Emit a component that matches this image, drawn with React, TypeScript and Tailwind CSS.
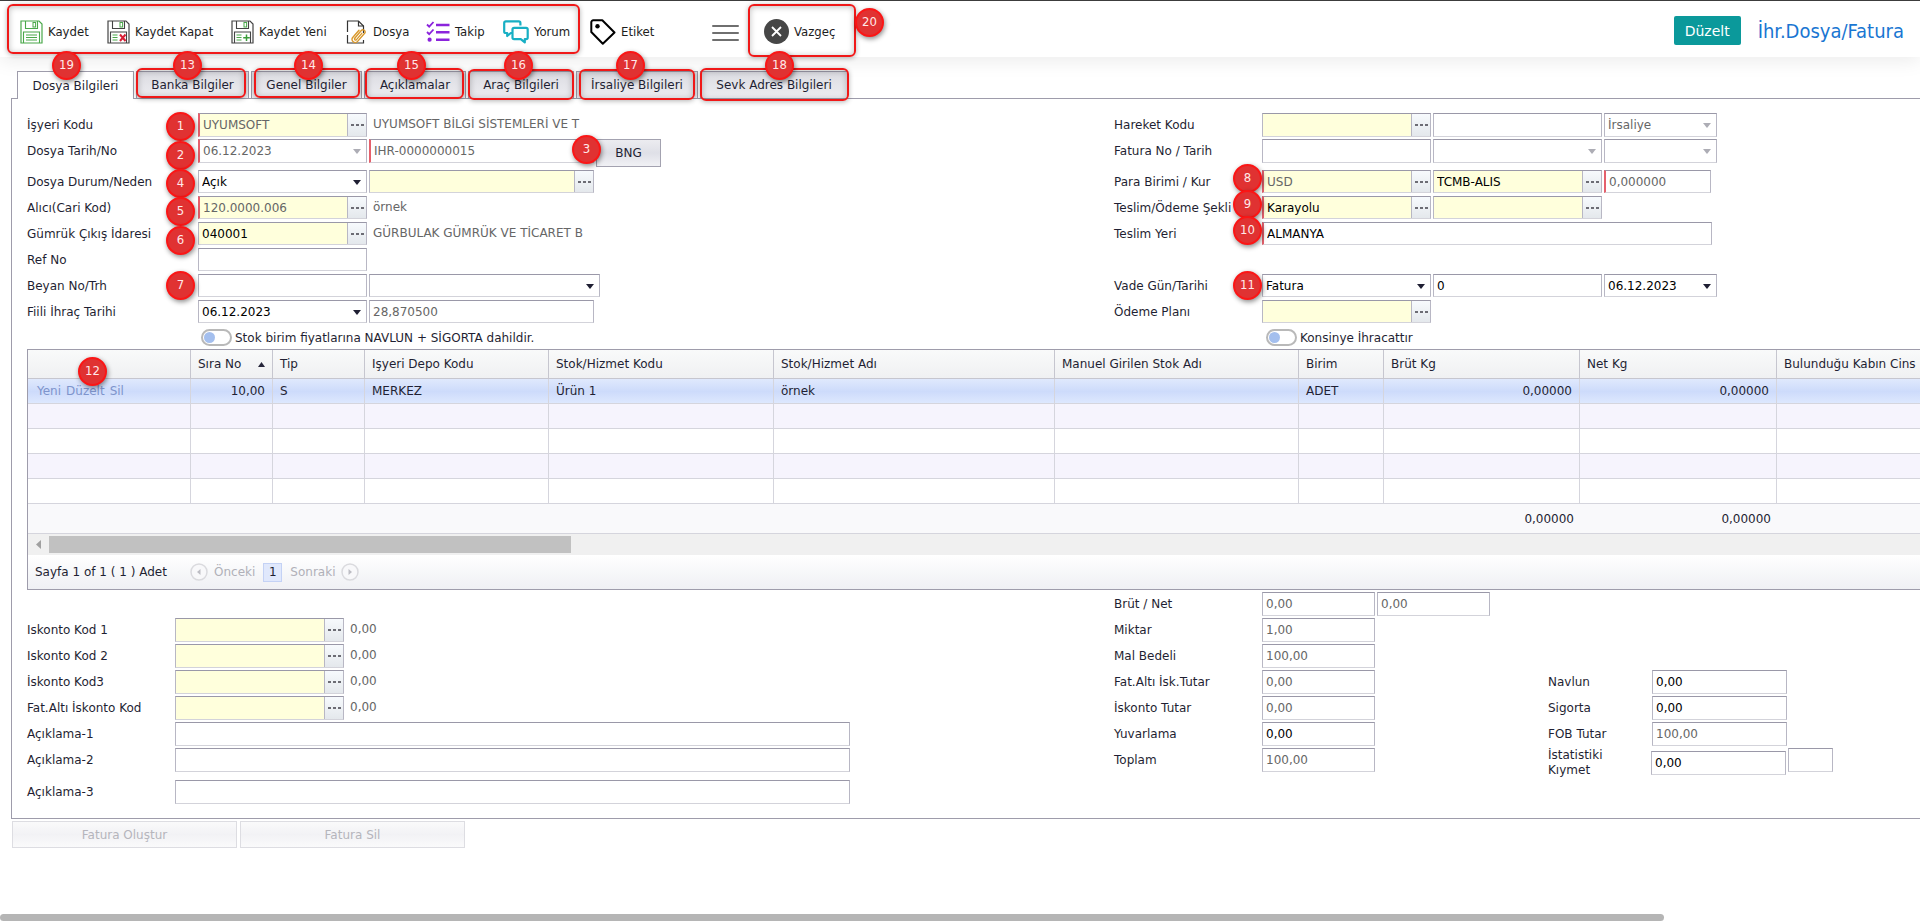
import type { ReactNode } from "react";

const tabs = [
    { title: "Dosya Bilgileri", width: "w-[117px]", badge: 19, badgePos: "left-[35px]", frame: "" },
    { title: "Banka Bilgiler", width: "w-[113px]", badge: 13, badgePos: "left-[37px]", frame: "left-0 right-[3px] -top-[3px] bottom-0" },
    { title: "Genel Bilgiler", width: "w-[111px]", badge: 14, badgePos: "left-[43px]", frame: "left-[3px] right-[2px] -top-[3px] bottom-0" },
    { title: "Açıklamalar", width: "w-[102px]", badge: 15, badgePos: "left-[33px]", frame: "left-[1px] right-[2px] -top-[3px] -bottom-[1px]" },
    { title: "Araç Bilgileri", width: "w-[106px]", badge: 16, badgePos: "left-[36px]", frame: "left-0 right-0 -top-[2px] -bottom-[2px]" },
    { title: "İrsaliye Bilgileri", width: "w-[122px]", badge: 17, badgePos: "left-[40px]", frame: "left-[3px] right-[3px] -top-[2px] -bottom-[2px]" },
    { title: "Sevk Adres Bilgileri", width: "w-[148px]", badge: 18, badgePos: "left-[65px]", frame: "left-0 -right-px -top-[3px] -bottom-[3px]" },
];

const columns = [
    { title: "", width: "w-[163px]", value: "", total: "" },
    { title: "Sıra No", width: "w-[82px]", value: "10,00", total: "", right: true, sorted: true },
    { title: "Tip", width: "w-[92px]", value: "S", total: "" },
    { title: "Işyeri Depo Kodu", width: "w-[184px]", value: "MERKEZ", total: "" },
    { title: "Stok/Hizmet Kodu", width: "w-[225px]", value: "Ürün 1", total: "" },
    { title: "Stok/Hizmet Adı", width: "w-[281px]", value: "örnek", total: "" },
    { title: "Manuel Girilen Stok Adı", width: "w-[244px]", value: "", total: "" },
    { title: "Birim", width: "w-[85px]", value: "ADET", total: "" },
    { title: "Brüt Kg", width: "w-[196px]", value: "0,00000", total: "0,00000", right: true },
    { title: "Net Kg", width: "w-[197px]", value: "0,00000", total: "0,00000", right: true },
    { title: "Bulunduğu Kabın Cins", width: "", value: "", total: "" },
];

function Badge({ n, className = "" }: { n: number; className?: string }) {
    return (
        <span className={`absolute z-20 flex h-[29px] w-[29px] items-center justify-center rounded-full border-2 border-[#fb1616] bg-[#e03232] pb-[2px] font-['DejaVu_Sans_Condensed','DejaVu_Sans',sans-serif] text-[13px] leading-none text-[#ffe9e9] shadow-[1px_2px_5px_rgba(0,0,0,0.45)] pointer-events-none ${className}`}>
            {n}
        </span>
    );
}

function Frame({ className = "" }: { className?: string }) {
    return (
        <span className={`absolute z-10 rounded-[6px] border-2 border-[#f01818] shadow-[0_1px_5px_rgba(0,0,0,0.3),inset_0_1px_6px_rgba(0,0,0,0.25)] pointer-events-none ${className}`} />
    );
}

function Floppy({ color, mark }: { color: string; mark: "lines" | "x" | "plus" }) {
    return (
        <svg width="23" height="24" viewBox="0 0 23 24" fill="none" className="shrink-0">
            <path d="M1 1h18l3 3v19H1z" stroke={color} strokeWidth="1.2" />
            <path d="M5.5 1v7.5h12V1" stroke={color} strokeWidth="1.1" />
            <rect x="13" y="2.5" width="2.6" height="4.5" stroke="#4aa84a" strokeWidth="1" />
            <path d="M3.5 23V12h16v11" stroke={color} strokeWidth="1.1" />
            {mark === "lines" && <path d="M6 15h11M6 17.5h11M6 20h11" stroke={color} strokeWidth="1.1" />}
            {mark !== "lines" && <path d="M5.5 15h5M5.5 17.5h5M5.5 20h5" stroke="#4aa84a" strokeWidth="1.1" />}
            {mark === "x" && <path d="M13 14.5l5.5 6.5M18.5 14.5L13 21" stroke="#d81f35" strokeWidth="2" />}
            {mark === "plus" && <path d="M15.5 14.5v6.5M12.2 17.8h6.6" stroke="#3a9c3a" strokeWidth="1.5" />}
        </svg>
    );
}

function DosyaIcon() {
    return (
        <svg width="22" height="24" viewBox="0 0 22 24" fill="none" className="shrink-0">
            <path d="M1.5 12V1h11l5 5v7M1.5 15v8h16v-3" stroke="#333" strokeWidth="1.2" />
            <path d="M12.5 1v5h5" stroke="#333" strokeWidth="1.2" />
            <path d="M8.5 18.5l6.8-8c1.7-2 5 .6 3.3 2.8l-7 8.1c-2.6 3-7.4-.8-4.9-3.9l6.3-7.3" stroke="#d9982b" strokeWidth="1.4" strokeLinecap="round" />
            <path d="M8.8 18.6c-.7 1.1.7 2.1 1.5 1.2l5.5-6.5" stroke="#d9982b" strokeWidth="1.3" strokeLinecap="round" />
        </svg>
    );
}

function TakipIcon() {
    return (
        <svg width="24" height="22" viewBox="0 0 24 22" fill="none" stroke="#8b24dc" className="shrink-0">
            <path d="M1 3.5l2.2 2.2L7.5 1M1 11l2.2 2.2L7.5 8.5" strokeWidth="1.8" />
            <path d="M10 4h13.5M10 11.3h13.5M10 18.7h13.5" strokeWidth="2.4" />
            <circle cx="3.6" cy="18.7" r="2.1" fill="#8b24dc" stroke="none" />
        </svg>
    );
}

function YorumIcon() {
    return (
        <svg width="26" height="24" viewBox="0 0 26 24" fill="none" stroke="#18afc4" strokeWidth="2.2" strokeLinejoin="round" className="shrink-0">
            <path d="M9.5 13H7.8l-3.6 3v-3H2.8a1.6 1.6 0 0 1-1.6-1.6V3a1.6 1.6 0 0 1 1.6-1.6h13A1.6 1.6 0 0 1 17.4 3v2.6" />
            <path d="M11.1 7.9h12a1.6 1.6 0 0 1 1.6 1.6v8a1.6 1.6 0 0 1-1.6 1.6h-1.3v3.3l-4-3.3h-6.7a1.6 1.6 0 0 1-1.6-1.6v-8a1.6 1.6 0 0 1 1.6-1.6z" />
        </svg>
    );
}

function EtiketIcon() {
    return (
        <svg width="26" height="26" viewBox="0 0 26 26" fill="none" className="shrink-0">
            <path d="M1.3 3.3a2 2 0 0 1 2-2h9l12.200 12.200L12.800 24.700 1.300 13z" stroke="#000" strokeWidth="2" strokeLinejoin="round" />
            <circle cx="7.5" cy="7.3" r="2.2" fill="#000" />
        </svg>
    );
}

function ToolButton({ icon, text, className = "" }: { icon: ReactNode; text: string; className?: string }) {
    return (
        <button className={`flex items-center gap-[5px] whitespace-nowrap text-left ${className}`}>
            {icon}
            <span>{text}</span>
        </button>
    );
}

function Header() {
    return (
        <header className="relative flex h-[57px] items-center border-t border-[#3c3c3c] bg-white pl-5 pr-4 pt-[5px] font-['DejaVu_Sans_Condensed','DejaVu_Sans',sans-serif] text-[13px] text-[#1d1d1d] shadow-[0_4px_18px_rgba(0,0,0,0.08)]">
            <Frame className="left-[7px] top-[3px] h-[50px] w-[573px]" />
            <ToolButton className="w-[87px]" icon={<Floppy color="#4aa84a" mark="lines" />} text="Kaydet" />
            <ToolButton className="w-[124px]" icon={<Floppy color="#444" mark="x" />} text="Kaydet Kapat" />
            <ToolButton className="w-[115px]" icon={<Floppy color="#444" mark="plus" />} text="Kaydet Yeni" />
            <ToolButton className="w-[80px]" icon={<DosyaIcon />} text="Dosya" />
            <ToolButton className="w-[77px]" icon={<TakipIcon />} text="Takip" />
            <ToolButton className="w-[87px]" icon={<YorumIcon />} text="Yorum" />
            <ToolButton className="w-[122px]" icon={<EtiketIcon />} text="Etiket" />
            <button aria-label="Menü" className="flex w-[27px] flex-col gap-[5px] pt-[2px]">
                <span className="h-[2px] w-full rounded bg-[#6f6f6f]" />
                <span className="h-[2px] w-full rounded bg-[#6f6f6f]" />
                <span className="h-[2px] w-full rounded bg-[#6f6f6f]" />
            </button>
            <div className="relative ml-[9px] flex h-[51px] w-[108px] items-center pl-4">
                <Frame className="-top-[2px] bottom-0 left-0 right-0" />
                <ToolButton
                    icon={
                        <svg width="25" height="25" viewBox="0 0 25 25" className="shrink-0">
                            <circle cx="12.5" cy="12.5" r="12.5" fill="#464646" />
                            <path d="M8 8l9 9M17 8l-9 9" stroke="#fff" strokeWidth="1.8" />
                        </svg>
                    }
                    text="Vazgeç"
                />
                <Badge n={20} className="-right-[28px] top-[2px]" />
            </div>
            <div className="ml-auto flex items-center gap-[17px] pb-[2px]">
                <button className="h-[29px] w-[67px] rounded-[2px] bg-[#0b999b] font-['DejaVu_Sans',sans-serif] text-[14px] text-white">Düzelt</button>
                <h1 className="text-[20px] text-[#1976d2]">İhr.Dosya/Fatura</h1>
            </div>
        </header>
    );
}

function TabBar() {
    return (
        <nav className="relative z-10 mt-[14px] flex h-[27px] gap-[2px] pl-[17px]">
            {tabs.map((tab, index) => (
                <div key={tab.title} className={`relative ${tab.width} shrink-0`}>
                    <button
                        className={`w-full whitespace-nowrap border border-b-0 border-[#9e9cab] text-center ${index === 0 ? "h-[28px] bg-white" : "h-[27px] bg-gradient-to-b from-[#dcdce2] to-[#ededf1]"}`}
                    >
                        {tab.title}
                    </button>
                    {tab.frame && <Frame className={tab.frame} />}
                    <Badge n={tab.badge} className={`-top-[20px] ${tab.badgePos}`} />
                </div>
            ))}
        </nav>
    );
}

type RowProps = { label: string; id: string; tall?: boolean; labelWidth?: string; className?: string; children: ReactNode };

function Row({ label, id, tall, labelWidth = "w-[171px]", className = "", children }: RowProps) {
    return (
        <div className={`relative flex gap-[2px] ${tall ? "mb-[2px] h-6" : "mb-[3px] h-[23px]"} ${className}`}>
            <label htmlFor={id} className={`-mr-[2px] flex shrink-0 items-center whitespace-nowrap ${labelWidth}`}>
                {label}
            </label>
            {children}
        </div>
    );
}

const box = "border border-t-[#9a98a8] border-l-[#b8b7c4] border-r-[#b8b7c4] border-b-[#d3d3da]";

type FieldProps = { id: string; name?: string; value?: string; width?: string; muted?: boolean; required?: boolean };

function TextField({ id, name, value = "", width = "w-[169px]", muted, required }: FieldProps) {
    return (
        <input
            id={id}
            aria-label={name}
            defaultValue={value}
            readOnly={muted}
            className={`h-full shrink-0 bg-white px-[3px] outline-none ${box} ${width} ${muted ? "text-[#666]" : "text-black"} ${required ? "border-l-2 border-l-[#e5606c]" : ""}`}
        />
    );
}

function LookupField({ id, name, value = "", width = "w-[169px]", muted, required }: FieldProps) {
    return (
        <div className={`flex h-full shrink-0 ${box} ${width} ${required ? "border-l-2 border-l-[#e5606c]" : ""}`}>
            <input
                id={id}
                aria-label={name}
                defaultValue={value}
                readOnly={muted}
                className={`min-w-0 flex-1 bg-[#ffffdc] px-[3px] outline-none ${muted ? "text-[#666]" : "text-black"}`}
            />
            <button aria-label="Seç" className="flex w-[19px] items-center justify-center gap-[2px] border-l border-[#b8b7c4] bg-gradient-to-b from-[#f7fafd] to-[#e4e8ec]">
                <span className="h-[2px] w-[3px] bg-[#6c6c74]" />
                <span className="h-[2px] w-[3px] bg-[#6c6c74]" />
                <span className="h-[2px] w-[3px] bg-[#6c6c74]" />
            </button>
        </div>
    );
}

function SelectField({ id, name, value = "", width = "w-[169px]", muted, required }: FieldProps) {
    return (
        <div className={`relative h-full shrink-0 ${width}`}>
            <select
                id={id}
                aria-label={name}
                className={`h-full w-full appearance-none bg-white px-[3px] outline-none ${box} ${muted ? "text-[#666]" : "text-black"} ${required ? "border-l-2 border-l-[#e5606c]" : ""}`}
            >
                <option>{value}</option>
            </select>
            <svg width="8" height="5" viewBox="0 0 8 5" className={`absolute right-[6px] top-[10px] pointer-events-none ${muted ? "text-[#adadb5]" : "text-[#1f1f33]"}`}>
                <path d="M0 0h8L4 5z" fill="currentColor" />
            </svg>
        </div>
    );
}

function Note({ children }: { children: ReactNode }) {
    return <output className="ml-1 whitespace-nowrap pt-[2px] text-[#666]">{children}</output>;
}

function Toggle({ id, label, className = "" }: { id: string; label: string; className?: string }) {
    return (
        <div className={`flex h-[23px] items-center gap-[3px] ${className}`}>
            <input
                id={id}
                type="checkbox"
                className="flex h-[17px] w-[31px] appearance-none items-center rounded-full border-2 border-[#b9b9b9] bg-white px-px before:size-[11px] before:rounded-full before:bg-[#a4bfee] checked:before:ml-auto"
            />
            <label htmlFor={id}>{label}</label>
        </div>
    );
}

function FileForm() {
    return (
        <section className="grid grid-cols-[1087fr_806fr]">
            <div>
                <Row label="İşyeri Kodu" id="isyeri" tall>
                    <LookupField id="isyeri" value="UYUMSOFT" muted required />
                    <Note>UYUMSOFT BİLGİ SİSTEMLERİ VE T</Note>
                    <Badge n={1} className="left-[139px] -top-[1px]" />
                </Row>
                <Row label="Dosya Tarih/No" id="tarih" tall className="mb-[7px]">
                    <SelectField id="tarih" value="06.12.2023" muted required />
                    <TextField id="dosya-no" name="Dosya No" value="IHR-0000000015" width="w-[225px]" muted required />
                    <button className="h-[28px] w-[65px] shrink-0 border border-[#a3a2b0] bg-gradient-to-b from-[#ececf0] via-[#dfe0e7] to-[#f1f1f5]">BNG</button>
                    <Badge n={2} className="left-[139px] top-[2px]" />
                    <Badge n={3} className="left-[545px] -top-[4px]" />
                </Row>
                <Row label="Dosya Durum/Neden" id="durum">
                    <SelectField id="durum" value="Açık" />
                    <LookupField id="neden" name="Neden" width="w-[225px]" />
                    <Badge n={4} className="left-[139px] -top-[1px]" />
                </Row>
                <Row label="Alıcı(Cari Kod)" id="alici">
                    <LookupField id="alici" value="120.0000.006" muted required />
                    <Note>örnek</Note>
                    <Badge n={5} className="left-[139px] top-[1px]" />
                </Row>
                <Row label="Gümrük Çıkış İdaresi" id="gumruk">
                    <LookupField id="gumruk" value="040001" />
                    <Note>GÜRBULAK GÜMRÜK VE TİCARET B</Note>
                    <Badge n={6} className="left-[139px] top-[4px]" />
                </Row>
                <Row label="Ref No" id="ref">
                    <TextField id="ref" />
                </Row>
                <Row label="Beyan No/Trh" id="beyan">
                    <TextField id="beyan" />
                    <SelectField id="beyan-trh" name="Beyan Tarihi" width="w-[231px]" />
                    <Badge n={7} className="left-[139px] -top-[3px]" />
                </Row>
                <Row label="Fiili İhraç Tarihi" id="fiili">
                    <SelectField id="fiili" value="06.12.2023" />
                    <TextField id="kur" name="Kur" value="28,870500" width="w-[225px]" muted />
                </Row>
                <Toggle id="navlun-dahil" label="Stok birim fiyatlarına NAVLUN + SİGORTA dahildir." className="pl-[174px]" />
            </div>

            <div>
                <Row label="Hareket Kodu" id="hareket" tall labelWidth="w-[148px]">
                    <LookupField id="hareket" />
                    <TextField id="hareket-adi" name="Hareket Adı" />
                    <SelectField id="hareket-tip" name="Hareket Tipi" value="İrsaliye" width="w-[113px]" muted />
                </Row>
                <Row label="Fatura No / Tarih" id="fatura" tall labelWidth="w-[148px]" className="mb-[7px]">
                    <TextField id="fatura" />
                    <SelectField id="fatura-tarih" name="Fatura Tarihi" muted />
                    <SelectField id="fatura-tip" name="Fatura Tipi" width="w-[113px]" muted />
                </Row>
                <Row label="Para Birimi / Kur" id="para" labelWidth="w-[148px]">
                    <LookupField id="para" value="USD" muted required />
                    <LookupField id="kur-tipi" name="Kur Tipi" value="TCMB-ALIS" />
                    <TextField id="kur-deger" name="Kur Değeri" value="0,000000" width="w-[107px]" muted required />
                    <Badge n={8} className="left-[119px] -top-[6px]" />
                </Row>
                <Row label="Teslim/Ödeme Şekli" id="teslim" labelWidth="w-[148px]">
                    <LookupField id="teslim" value="Karayolu" required />
                    <LookupField id="odeme" name="Ödeme Şekli" />
                    <Badge n={9} className="left-[119px] -top-[6px]" />
                </Row>
                <Row label="Teslim Yeri" id="yer" labelWidth="w-[148px]" className="mb-[29px]">
                    <TextField id="yer" value="ALMANYA" width="w-[450px]" required />
                    <Badge n={10} className="left-[119px] -top-[6px]" />
                </Row>
                <Row label="Vade Gün/Tarihi" id="vade" labelWidth="w-[148px]">
                    <SelectField id="vade" value="Fatura" />
                    <TextField id="vade-gun" name="Vade Gün" value="0" />
                    <SelectField id="vade-tarih" name="Vade Tarihi" value="06.12.2023" width="w-[113px]" />
                    <Badge n={11} className="left-[119px] -top-[3px]" />
                </Row>
                <Row label="Ödeme Planı" id="plan" labelWidth="w-[148px]">
                    <LookupField id="plan" />
                </Row>
                <Toggle id="konsinye" label="Konsinye İhracattır" className="pl-[152px]" />
            </div>
        </section>
    );
}

function RoundArrow({ flip }: { flip?: boolean }) {
    return (
        <svg width="18" height="18" viewBox="0 0 18 18" className={flip ? "rotate-180" : ""}>
            <circle cx="9" cy="9" r="8" fill="#f8f8fa" stroke="#dadade" strokeWidth="1.5" />
            <path d="M10.500 6v6L7 9z" fill="#bdbdc4" />
        </svg>
    );
}

function StockGrid() {
    return (
        <section className="relative border-y border-l border-[#9e9cab]">
            <table className="w-full table-fixed border-separate border-spacing-0">
                <thead>
                    <tr className="h-[29px] bg-gradient-to-b from-[#f9fafa] to-[#eff0f2]">
                        {columns.map((col) => (
                            <th key={col.title} className={`overflow-hidden whitespace-nowrap border-b border-r border-[#c6c6cf] pl-[7px] text-left font-normal last:border-r-0 ${col.width}`}>
                                <span className="flex items-center justify-between">
                                    {col.title}
                                    {col.sorted && (
                                        <svg width="7" height="5" viewBox="0 0 7 5" className="mr-[7px]">
                                            <path d="M0 5h7L3.5 0z" fill="#26263a" />
                                        </svg>
                                    )}
                                </span>
                            </th>
                        ))}
                    </tr>
                </thead>
                <tbody>
                    <tr className="h-[25px] bg-gradient-to-b from-[#e0e9fd] via-[#cddbfb] to-[#dfe9fe]">
                        {columns.map((col, index) => (
                            <td key={col.title} className={`border-b border-r border-[#d5d5dd] px-[7px] last:border-r-0 ${col.right ? "text-right" : ""}`}>
                                {index === 0 ? (
                                    <span className="flex gap-[5px] pl-[2px] text-[#7e94cc]">
                                        <a href="#yeni">Yeni</a>
                                        <a href="#duzelt">Düzelt</a>
                                        <a href="#sil">Sil</a>
                                    </span>
                                ) : (
                                    col.value
                                )}
                            </td>
                        ))}
                    </tr>
                    {[0, 1, 2, 3].map((row) => (
                        <tr key={row} className="h-[25px] odd:bg-white even:bg-[#f6f4fd]">
                            {columns.map((col) => (
                                <td key={col.title} className="border-b border-r border-[#d5d5dd] last:border-r-0" />
                            ))}
                        </tr>
                    ))}
                </tbody>
                <tfoot>
                    <tr className="h-[30px] bg-[#f9f9fb]">
                        {columns.map((col) => (
                            <td key={col.title} className="border-b border-[#d5d5dd] px-[6px] text-right">
                                {col.total}
                            </td>
                        ))}
                    </tr>
                </tfoot>
            </table>
            <div className="flex h-[21px] items-center bg-[#f0f0f0] pl-[8px]">
                <svg width="5" height="9" viewBox="0 0 5 9">
                    <path d="M5 0v9L0 4.500z" fill="#a0a0a0" />
                </svg>
                <span className="ml-2 h-[17px] w-[522px] bg-[#c1c1c1]" />
            </div>
            <div className="flex h-[34px] items-center bg-gradient-to-b from-white to-[#eff0f4] pl-[7px] text-[#b0b0b8]">
                <span className="w-[155px] text-[#1f1f33]">Sayfa 1 of 1 ( 1 ) Adet</span>
                <button className="flex items-center gap-[6px]">
                    <RoundArrow />
                    Önceki
                </button>
                <span className="mx-2 flex h-[19px] w-[19px] items-center justify-center border border-[#c4d2f5] bg-[#e0e8fc] text-[#1f1f33]">1</span>
                <button className="flex items-center gap-[6px]">
                    Sonraki
                    <RoundArrow flip />
                </button>
            </div>
            <Badge n={12} className="left-[50px] top-[7px]" />
        </section>
    );
}

function Totals() {
    return (
        <section className="grid grid-cols-[1087fr_806fr] pt-[2px]">
            <div className="pt-[26px]">
                {["Iskonto Kod 1", "Iskonto Kod 2", "İskonto Kod3", "Fat.Altı İskonto Kod"].map((label, index) => (
                    <Row key={label} label={label} id={`iskonto-${index}`} tall labelWidth="w-[148px]">
                        <LookupField id={`iskonto-${index}`} />
                        <Note>0,00</Note>
                    </Row>
                ))}
                <Row label="Açıklama-1" id="aciklama-1" tall labelWidth="w-[148px]">
                    <TextField id="aciklama-1" width="w-[675px]" />
                </Row>
                <Row label="Açıklama-2" id="aciklama-2" tall labelWidth="w-[148px]">
                    <TextField id="aciklama-2" width="w-[675px]" />
                </Row>
                <Row label="Açıklama-3" id="aciklama-3" tall labelWidth="w-[148px]" className="mt-2">
                    <TextField id="aciklama-3" width="w-[675px]" />
                </Row>
            </div>

            <div className="flex">
                <div className="w-[434px]">
                    <Row label="Brüt / Net" id="brut" tall labelWidth="w-[148px]">
                        <TextField id="brut" value="0,00" width="w-[113px]" muted />
                        <TextField id="net" name="Net" value="0,00" width="w-[113px]" muted />
                    </Row>
                    <Row label="Miktar" id="miktar" tall labelWidth="w-[148px]">
                        <TextField id="miktar" value="1,00" width="w-[113px]" muted />
                    </Row>
                    <Row label="Mal Bedeli" id="bedel" tall labelWidth="w-[148px]">
                        <TextField id="bedel" value="100,00" width="w-[113px]" muted />
                    </Row>
                    <Row label="Fat.Altı İsk.Tutar" id="alti" tall labelWidth="w-[148px]">
                        <TextField id="alti" value="0,00" width="w-[113px]" muted />
                    </Row>
                    <Row label="İskonto Tutar" id="iskonto-tutar" tall labelWidth="w-[148px]">
                        <TextField id="iskonto-tutar" value="0,00" width="w-[113px]" muted />
                    </Row>
                    <Row label="Yuvarlama" id="yuvarlama" tall labelWidth="w-[148px]">
                        <TextField id="yuvarlama" value="0,00" width="w-[113px]" />
                    </Row>
                    <Row label="Toplam" id="toplam" tall labelWidth="w-[148px]">
                        <TextField id="toplam" value="100,00" width="w-[113px]" muted />
                    </Row>
                </div>
                <div className="pt-[78px]">
                    <Row label="Navlun" id="navlun" tall labelWidth="w-[104px]">
                        <TextField id="navlun" value="0,00" width="w-[135px]" />
                    </Row>
                    <Row label="Sigorta" id="sigorta" tall labelWidth="w-[104px]">
                        <TextField id="sigorta" value="0,00" width="w-[135px]" />
                    </Row>
                    <Row label="FOB Tutar" id="fob" tall labelWidth="w-[104px]">
                        <TextField id="fob" value="100,00" width="w-[135px]" muted />
                    </Row>
                    <div className="flex gap-[2px]">
                        <label htmlFor="kiymet" className="w-[101px] pr-5 leading-[15px]">
                            İstatistiki Kıymet
                        </label>
                        <div className="h-[27px] pt-[3px]">
                            <TextField id="kiymet" value="0,00" width="w-[135px]" />
                        </div>
                        <div className="h-6">
                            <TextField id="kiymet-birim" name="Birim" width="w-[45px]" />
                        </div>
                    </div>
                </div>
            </div>
        </section>
    );
}

export default function App() {
    return (
        <div className="flex min-h-screen flex-col overflow-hidden bg-white font-['DejaVu_Sans',sans-serif] text-[12px] leading-[18px] text-[#1f1f33]">
            <Header />
            <TabBar />
            <main className="ml-[11px] border-y border-l border-[#9e9cab] pb-[12px] pl-[15px] pt-[14px]">
                <FileForm />
                <StockGrid />
                <Totals />
            </main>
            <div className="mt-[2px] flex gap-[3px] pl-3">
                <button disabled className="h-[27px] w-[225px] border border-[#dddde2] bg-gradient-to-b from-[#fafafb] via-[#f2f2f5] to-[#fafafb] text-[#b5b5bc]">Fatura Oluştur</button>
                <button disabled className="h-[27px] w-[225px] border border-[#dddde2] bg-gradient-to-b from-[#fafafb] via-[#f2f2f5] to-[#fafafb] text-[#b5b5bc]">Fatura Sil</button>
            </div>
            <div className="mt-auto mb-px h-[7px] w-13/15 rounded-full bg-[#b5b5b5]" />
        </div>
    );
}
